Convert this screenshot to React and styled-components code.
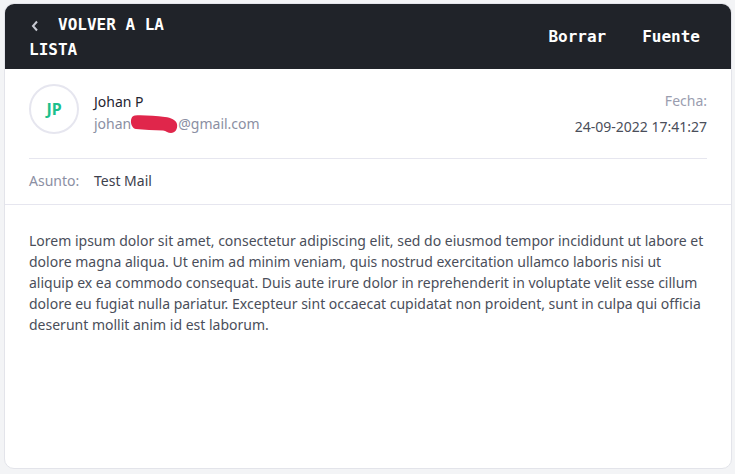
import React from "react";
import styled, { createGlobalStyle } from "styled-components";

const Global = createGlobalStyle`
  html, body { margin: 0; padding: 0; background: #f3f4f6; }
  body { font-family: "Noto Sans", "Open Sans", sans-serif; }
  * { box-sizing: border-box; }
`;

const Page = styled.div`
  padding: 3px 3px 5px 4px;
  height: 474px;
`;

const Card = styled.div`
  height: 466px;
  background: #ffffff;
  border: 1px solid #e3e4ea;
  border-radius: 10px;
  overflow: hidden;
  display: flex;
  flex-direction: column;
`;

const Header = styled.div`
  background: #202329;
  height: 65px;
  flex-shrink: 0;
  display: flex;
  align-items: center;
  justify-content: space-between;
  padding: 0 31px 0 24px;
  font-family: "DejaVu Sans Mono", "Liberation Mono", monospace;
  font-weight: bold;
  font-size: 16px;
  color: #ffffff;
`;

const BackLink = styled.div`
  width: 170px;
  line-height: 25px;
  padding-top: 1px;
`;

const Chevron = styled.span`
  display: inline-block;
  width: 29px;
  vertical-align: top;
  svg { display: block; margin: 8px 0 0 2px; }
`;

const Actions = styled.div`
  display: flex;
  gap: 36px;
  padding-left: 1px;
`;

const Action = styled.span`
  line-height: 20px;
`;

const SenderSection = styled.div`
  padding: 0 24px;
`;

const SenderRow = styled.div`
  display: flex;
  align-items: flex-start;
  padding: 15px 0 21px;
  border-bottom: 1px solid #e6e6ef;
`;

const Avatar = styled.div`
  width: 50px;
  height: 50px;
  border-radius: 50%;
  border: 2px solid #e6e6ef;
  display: flex;
  align-items: center;
  justify-content: center;
  color: #1dbf8c;
  font-weight: 700;
  font-size: 16px;
  flex-shrink: 0;
`;

const SenderInfo = styled.div`
  margin-left: 15px;
  padding-top: 8px;
  display: flex;
  flex-direction: column;
  gap: 2px;
  flex: 1;
`;

const Name = styled.div`
  font-size: 14px;
  line-height: 20px;
  color: #1f2430;
`;

const Email = styled.div`
  display: flex;
  align-items: center;
  height: 20px;
  font-size: 14px;
  line-height: 20px;
  color: #8b8fa3;
`;

const Redaction = styled.svg`
  display: block;
  flex-shrink: 0;
  width: 49px;
  height: 18px;
  margin: 0 -1px 0 -1px;
  overflow: visible;
`;

const DateBlock = styled.div`
  display: flex;
  flex-direction: column;
  align-items: flex-end;
  gap: 6px;
  padding-top: 7px;
  font-size: 14px;
  line-height: 20px;
`;

const DateLabel = styled.div`
  color: #9a9daf;
`;

const DateValue = styled.div`
  color: #4a4e5a;
`;

const SubjectRow = styled.div`
  display: flex;
  align-items: center;
  padding: 12px 24px 13px;
  border-bottom: 1px solid #e6e6ef;
  font-size: 14px;
  line-height: 20px;
`;

const SubjectLabel = styled.span`
  width: 65px;
  color: #8b8fa3;
`;

const SubjectValue = styled.span`
  color: #3d414d;
`;

const Body = styled.div`
  padding: 25px 24px;
  font-size: 14px;
  line-height: 21px;
  color: #4a4e5a;
`;

export default function App() {
  return (
    <>
      <Global />
      <Page>
        <Card>
          <Header>
            <BackLink>
              <Chevron>
                <svg width="8" height="12" viewBox="0 0 8 12">
                  <path d="M6 1.5 L2 6 L6 10.5" fill="none" stroke="#c8cad3" strokeWidth="2" />
                </svg>
              </Chevron>
              VOLVER A LA LISTA
            </BackLink>
            <Actions>
              <Action>Borrar</Action>
              <Action>Fuente</Action>
            </Actions>
          </Header>
          <SenderSection>
            <SenderRow>
              <Avatar>JP</Avatar>
              <SenderInfo>
                <Name>Johan P</Name>
                <Email>
                  <span>johan</span>
                  <Redaction viewBox="0 0 49 18">
                    <path
                      d="M5 0.5 C14 0, 25 1, 35 2 C41 2.5, 46 5, 47 9 C48 14, 45 18, 41 18 C38 18, 36 16, 33 15.5 C24 15, 14 15, 6 14 C0 13, -1 1, 5 0.5 Z"
                      fill="#e0264b"
                    />
                  </Redaction>
                  <span>@gmail.com</span>
                </Email>
              </SenderInfo>
              <DateBlock>
                <DateLabel>Fecha:</DateLabel>
                <DateValue>24-09-2022 17:41:27</DateValue>
              </DateBlock>
            </SenderRow>
          </SenderSection>
          <SubjectRow>
            <SubjectLabel>Asunto:</SubjectLabel>
            <SubjectValue>Test Mail</SubjectValue>
          </SubjectRow>
          <Body>
            Lorem ipsum dolor sit amet, consectetur adipiscing elit, sed do eiusmod tempor incididunt ut labore et
            dolore magna aliqua. Ut enim ad minim veniam, quis nostrud exercitation ullamco laboris nisi ut
            aliquip ex ea commodo consequat. Duis aute irure dolor in reprehenderit in voluptate velit esse cillum
            dolore eu fugiat nulla pariatur. Excepteur sint occaecat cupidatat non proident, sunt in culpa qui officia
            deserunt mollit anim id est laborum.
          </Body>
        </Card>
      </Page>
    </>
  );
}
